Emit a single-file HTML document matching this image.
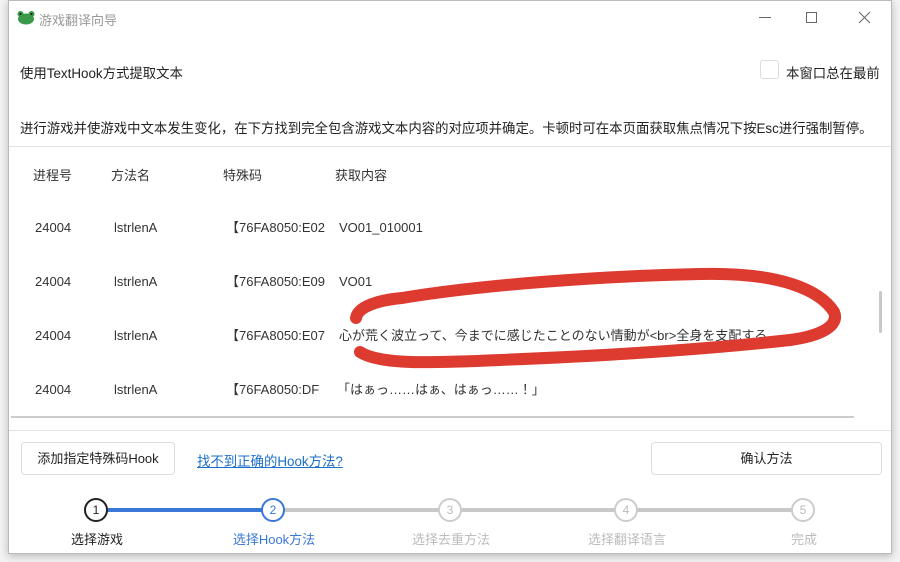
<!DOCTYPE html>
<html><head><meta charset="utf-8"><style>
*{margin:0;padding:0;box-sizing:border-box}
body{width:900px;height:562px;overflow:hidden;background:#f3f3f3;position:relative;font-family:"Liberation Sans","Noto Sans CJK SC",sans-serif;color:#222}
.win{position:absolute;left:8px;top:0;width:884px;height:554px;background:#fff;border:1px solid #bbb;box-shadow:0 2px 8px rgba(0,0,0,.25)}
.a{position:absolute;white-space:nowrap}
.t{font-size:13.4px}
.row{font-size:13px;color:#333;line-height:18px}
.code{overflow:hidden;width:101px}
.btn{position:absolute;border:1px solid #ddd;border-radius:4px;background:#fff;font-size:13px;text-align:center}
.c{position:absolute;width:24px;height:24px;border-radius:50%;border:2px solid #ccc;background:#fff;font-size:12px;text-align:center;line-height:20px;color:#bbb}
.lbl{position:absolute;font-size:13px;color:#bbb;white-space:nowrap;transform:translateX(-50%)}
</style></head><body>
<div class="win">
 <svg class="a" style="left:8px;top:10px" width="18" height="14"><ellipse cx="9" cy="8" rx="8" ry="5.5" fill="#3a9a4a"/><circle cx="3.5" cy="3" r="3" fill="#3a9a4a"/><circle cx="14.5" cy="3" r="3" fill="#3a9a4a"/><circle cx="3.5" cy="3" r="1" fill="#111"/><circle cx="14.5" cy="3" r="1" fill="#111"/></svg>
 <div class="a" style="left:30px;top:9px;font-size:13px;color:#999">游戏翻译向导</div>
 <div class="a" style="left:750px;top:16px;width:12px;height:1px;background:#666"></div>
 <div class="a" style="left:797px;top:11px;width:11px;height:11px;border:1px solid #666"></div>
 <svg class="a" style="left:849px;top:10px" width="13" height="13"><path d="M1 1L12 12M12 1L1 12" stroke="#666" stroke-width="1"/></svg>
 <div class="a t" style="left:11px;top:61px">使用TextHook方式提取文本</div>
 <div class="a" style="left:751px;top:59px;width:19px;height:19px;border:1px solid #ddd;border-radius:3px"></div>
 <div class="a t" style="left:777px;top:61px">本窗口总在最前</div>
 <div class="a t" style="left:11px;top:116px">进行游戏并使游戏中文本发生变化，在下方找到完全包含游戏文本内容的对应项并确定。卡顿时可在本页面获取焦点情况下按Esc进行强制暂停。</div>
 <div class="a" style="left:0;top:145px;width:882px;height:1px;background:#e3e3e3"></div>
 <div class="a row" style="left:24px;top:166px">进程号</div>
 <div class="a row" style="left:102px;top:166px">方法名</div>
 <div class="a row" style="left:214px;top:166px">特殊码</div>
 <div class="a row" style="left:326px;top:166px">获取内容</div>

 <div class="a row" style="left:26px;top:218px">24004</div><div class="a row" style="left:105px;top:218px">lstrlenA</div><div class="a row code" style="left:217px;top:218px">【76FA8050:E02</div><div class="a row" style="left:330px;top:218px">VO01_010001</div>
 <div class="a row" style="left:26px;top:272px">24004</div><div class="a row" style="left:105px;top:272px">lstrlenA</div><div class="a row code" style="left:217px;top:272px">【76FA8050:E09</div><div class="a row" style="left:330px;top:272px">VO01</div>
 <div class="a row" style="left:26px;top:326px">24004</div><div class="a row" style="left:105px;top:326px">lstrlenA</div><div class="a row code" style="left:217px;top:326px">【76FA8050:E07</div><div class="a row" style="left:330px;top:326px;font-family:'Liberation Sans','Noto Sans CJK JP',sans-serif">心が荒く波立って、今までに感じたことのない情動が&lt;br&gt;全身を支配する</div>
 <div class="a row" style="left:26px;top:380px">24004</div><div class="a row" style="left:105px;top:380px">lstrlenA</div><div class="a row code" style="left:217px;top:380px">【76FA8050:DF</div><div class="a row" style="left:328px;top:380px;font-family:'Liberation Sans','Noto Sans CJK JP',sans-serif">「はぁっ……はぁ、はぁっ……！」</div>
 <div class="a" style="left:2px;top:415px;width:843px;height:2px;background:#ccc"></div>
 <div class="a" style="left:870px;top:290px;width:3px;height:42px;background:#c8c8c8;border-radius:2px"></div>
 <div class="a" style="left:0;top:429px;width:882px;height:1px;background:#e3e3e3"></div>
 <div class="btn" style="left:12px;top:441px;width:154px;height:33px;line-height:31px">添加指定特殊码Hook</div>
 <div class="a t" style="left:188px;top:449px;color:#1a6fc9;text-decoration:underline">找不到正确的Hook方法?</div>
 <div class="btn" style="left:642px;top:441px;width:231px;height:33px;line-height:31px">确认方法</div>
 <div class="a" style="left:92px;top:507px;width:176px;height:4px;background:#3a78d8"></div>
 <div class="a" style="left:268px;top:507px;width:520px;height:4px;background:#c8c8c8"></div>
 <div class="c" style="left:75px;top:497px;border-color:#222;color:#222">1</div>
 <div class="c" style="left:252px;top:497px;border-color:#3a78d8;color:#3a78d8">2</div>
 <div class="c" style="left:429px;top:497px">3</div>
 <div class="c" style="left:605px;top:497px">4</div>
 <div class="c" style="left:782px;top:497px">5</div>
 <div class="lbl" style="left:88px;top:528px;color:#222">选择游戏</div>
 <div class="lbl" style="left:265px;top:528px;color:#3a78d8">选择Hook方法</div>
 <div class="lbl" style="left:442px;top:528px">选择去重方法</div>
 <div class="lbl" style="left:618px;top:528px">选择翻译语言</div>
 <div class="lbl" style="left:795px;top:528px">完成</div>
</div>
<svg style="position:absolute;left:0;top:0" width="900" height="562"><path d="M356 318 C358 306 380 300 402 298 C480 285 600 276 700 274 C780 272 820 290 834 312 C840 326 820 336 790 340 C700 350 600 356 500 360 C430 363 380 365 360 352" fill="none" stroke="#dd3a30" stroke-width="12" stroke-linecap="round"/></svg>
</body></html>
